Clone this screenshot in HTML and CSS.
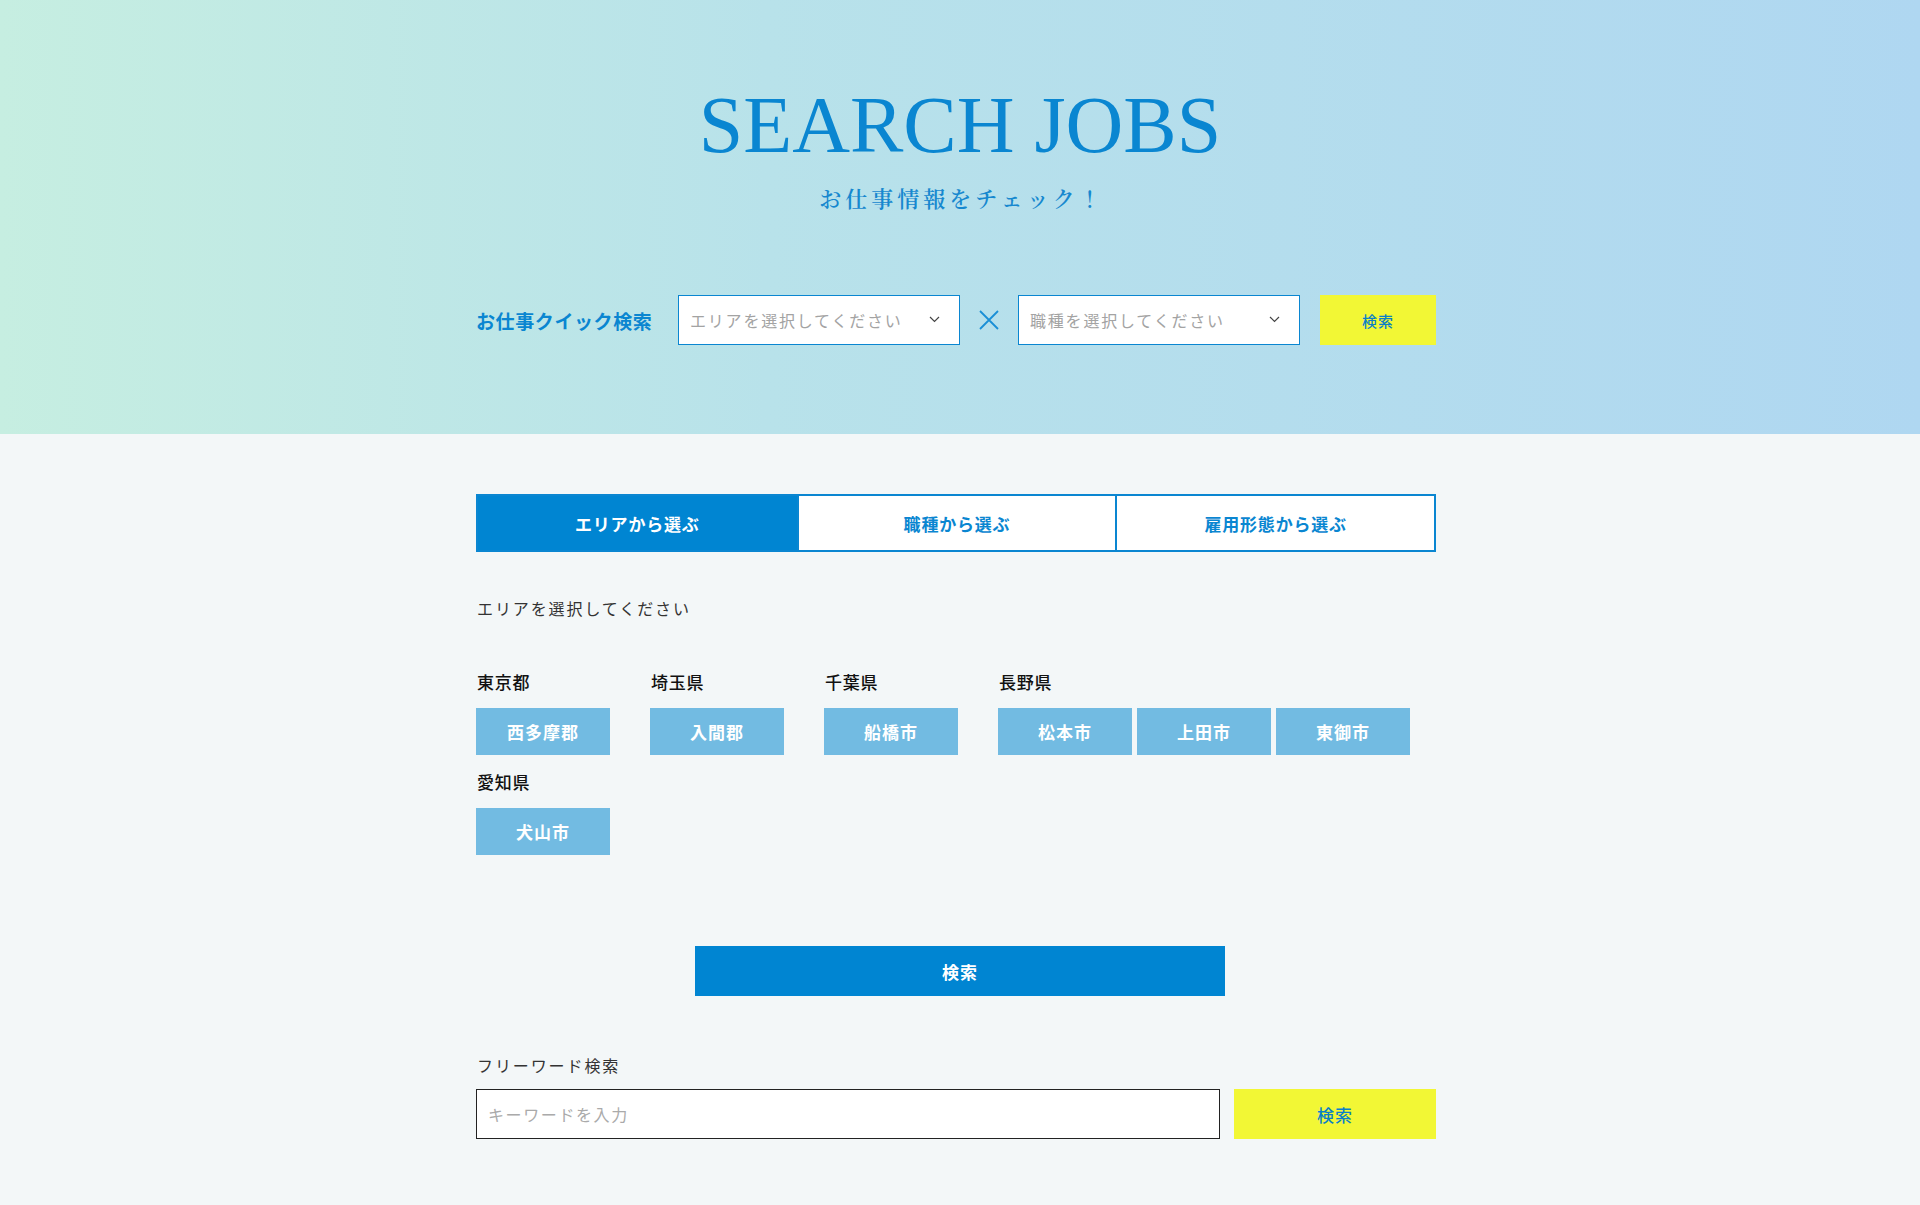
FILE: index.html
```html
<!DOCTYPE html>
<html lang="ja">
<head>
<meta charset="utf-8">
<title>SEARCH JOBS</title>
<link rel="stylesheet" href="styles.css">
</head>
<body>
<header class="hero">
  <h1 class="hero-title">SEARCH JOBS</h1>
  <p class="hero-sub">お仕事情報をチェック！</p>
  <div class="quick">
    <span class="quick-label">お仕事クイック検索</span>
    <div class="select">
      <span class="select-text">エリアを選択してください</span>
      <svg class="chev" width="11" height="7" viewBox="0 0 11 7"><path d="M1 1 L5.5 5.5 L10 1" fill="none" stroke="#444" stroke-width="1.2"/></svg>
    </div>
    <svg class="times" width="20" height="20" viewBox="0 0 20 20"><path d="M1 1 L19 19 M19 1 L1 19" stroke="#1a8fd6" stroke-width="1.8" fill="none"/></svg>
    <div class="select">
      <span class="select-text">職種を選択してください</span>
      <svg class="chev" width="11" height="7" viewBox="0 0 11 7"><path d="M1 1 L5.5 5.5 L10 1" fill="none" stroke="#444" stroke-width="1.2"/></svg>
    </div>
    <button class="btn-yellow btn-quick">検索</button>
  </div>
</header>

<main class="main">
  <div class="tabs">
    <div class="tab is-active">エリアから選ぶ</div>
    <div class="tab">職種から選ぶ</div>
    <div class="tab">雇用形態から選ぶ</div>
  </div>

  <p class="prompt">エリアを選択してください</p>

  <div class="areas">
    <div class="area">
      <h3 class="area-name">東京都</h3>
      <div class="area-btns"><span class="area-btn">西多摩郡</span></div>
    </div>
    <div class="area">
      <h3 class="area-name">埼玉県</h3>
      <div class="area-btns"><span class="area-btn">入間郡</span></div>
    </div>
    <div class="area">
      <h3 class="area-name">千葉県</h3>
      <div class="area-btns"><span class="area-btn">船橋市</span></div>
    </div>
    <div class="area">
      <h3 class="area-name">長野県</h3>
      <div class="area-btns"><span class="area-btn">松本市</span><span class="area-btn">上田市</span><span class="area-btn">東御市</span></div>
    </div>
    <div class="area">
      <h3 class="area-name">愛知県</h3>
      <div class="area-btns"><span class="area-btn">犬山市</span></div>
    </div>
  </div>

  <div class="search-wrap"><button class="btn-blue">検索</button></div>

  <p class="free-label">フリーワード検索</p>
  <div class="free">
    <div class="free-input">キーワードを入力</div>
    <button class="btn-yellow btn-free">検索</button>
  </div>
</main>
</body>
</html>
```

FILE: styles.css
```css
* { box-sizing: border-box; }
html, body { margin: 0; padding: 0; }
body {
  background: #f3f7f8;
  font-family: "Noto Sans CJK JP", "Noto Sans", sans-serif;
  color: #222;
  min-height: 1205px;
}
button { font-family: inherit; border: 0; cursor: pointer; padding: 0; }

.hero {
  height: 434px;
  background: linear-gradient(90deg, #c6eee1 0%, #b8e2ea 40%, #afd7f1 100%);
  padding-top: 85px;
  text-align: center;
}
.hero-title {
  margin: 0;
  font-family: "Liberation Serif", "DejaVu Serif", serif;
  font-weight: 400;
  font-size: 80px;
  line-height: 80px;
  letter-spacing: 0;
  color: #0a86d1;
}
.hero-sub {
  margin: 18px 0 0;
  font-family: "Noto Serif CJK JP", "Noto Sans CJK JP", serif;
  font-size: 22px;
  font-weight: 600;
  line-height: 30px;
  letter-spacing: 4px;
  padding-left: 4px;
  color: #1688cf;
}
.quick {
  width: 960px;
  margin: 82px 0 0 calc(50% - 484px);
  display: flex;
  align-items: center;
  height: 50px;
}
.quick-label {
  width: 202px;
  text-align: left;
  font-size: 19px;
  font-weight: 700;
  letter-spacing: 0.6px;
  color: #0a86d1;
}
.select {
  width: 282px;
  height: 50px;
  background: #fff;
  border: 1.5px solid #0a86d1;
  display: flex;
  align-items: center;
  justify-content: space-between;
  padding: 0 19px 0 11px;
}
.select-text {
  font-size: 16px;
  letter-spacing: 1.8px;
  color: #a3a3a3;
}
.chev { margin-top: -2px; }
.times { margin: 0 19px; flex: none; }
.btn-yellow {
  background: #f2f735;
  color: #0a7fc7;
  font-weight: 500;
}
.btn-quick {
  width: 116px;
  height: 50px;
  margin-left: 20px;
  font-size: 15px;
  letter-spacing: 1px;
}

.main {
  width: 960px;
  margin-left: calc(50% - 484px);
  padding-top: 60px;
  padding-bottom: 67px;
}
.tabs {
  display: grid;
  grid-template-columns: 1fr 1fr 1fr;
  height: 58px;
  border: 2px solid #0a86d1;
  background: #fff;
}
.tab {
  display: flex;
  align-items: center;
  justify-content: center;
  font-size: 17px;
  font-weight: 700;
  letter-spacing: 0.8px;
  color: #0a86d1;
}
.tab + .tab { border-left: 2px solid #0a86d1; }
.tab.is-active { background: #0085d2; color: #fff; }

.prompt {
  margin: 44px 0 0 1px;
  font-size: 16px;
  line-height: 24px;
  letter-spacing: 1.9px;
  color: #333;
}
.areas {
  margin-top: 49px;
  display: flex;
  flex-wrap: wrap;
  column-gap: 40px;
  row-gap: 14px;
}
.area-name {
  margin: 0 0 14px 1px;
  font-size: 17px;
  line-height: 25px;
  font-weight: 500;
  letter-spacing: 0.8px;
  color: #111;
}
.area-btns { display: flex; gap: 5px; }
.area-btn {
  width: 134px;
  height: 47px;
  background: #72bbe2;
  color: #fff;
  font-size: 17px;
  font-weight: 700;
  letter-spacing: 1px;
  display: flex;
  align-items: center;
  justify-content: center;
}
.search-wrap {
  margin-top: 91px;
  padding-left: 8px;
  display: flex;
  justify-content: center;
}
.btn-blue {
  width: 530px;
  height: 50px;
  background: #0085d2;
  color: #fff;
  font-size: 17px;
  font-weight: 700;
  letter-spacing: 1px;
}
.free-label {
  margin: 57px 0 0 1px;
  font-size: 16px;
  line-height: 24px;
  letter-spacing: 1.9px;
  color: #333;
}
.free {
  margin-top: 12px;
  display: flex;
  gap: 14px;
  height: 50px;
}
.free-input {
  flex: 1;
  background: #fff;
  border: 1.5px solid #222;
  display: flex;
  align-items: center;
  padding-left: 11px;
  font-size: 16px;
  letter-spacing: 1.6px;
  color: #aaa;
}
.btn-free {
  width: 202px;
  height: 50px;
  font-size: 17px;
  letter-spacing: 1px;
}
```
